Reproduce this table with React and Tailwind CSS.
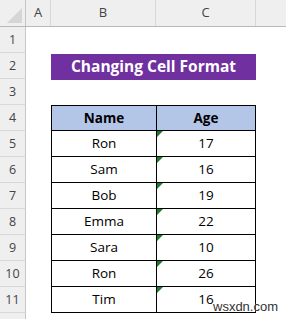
import React from "react";

const rows = [
  { name: "Ron", age: "17" },
  { name: "Sam", age: "16" },
  { name: "Bob", age: "19" },
  { name: "Emma", age: "22" },
  { name: "Sara", age: "10" },
  { name: "Ron", age: "26" },
  { name: "Tim", age: "16" },
];

const RowHead = ({ n }) => (
  <div className="w-[26px] shrink-0 h-full bg-[#efefef] border-r border-b border-r-[#c6c6c6] border-b-[#d8d8d8] flex items-end justify-center pb-[2px] text-[12.5px] text-[#444]">
    {n}
  </div>
);

const Triangle = () => (
  <svg className="absolute left-0 top-0" width="6" height="6" viewBox="0 0 6 6">
    <polygon points="0,0 6,0 0,6" fill="#1f7a2e" />
  </svg>
);

const App = () => {
  return (
    <div className="relative w-[286px] h-[319px] overflow-hidden bg-white font-['Open_Sans',sans-serif] text-black">
      <div className="flex h-[27px] bg-[#efefef] border-b border-[#b9b9b9] text-[13px] text-[#444]">
        <div className="w-[26px] shrink-0 border-r border-[#c6c6c6] relative">
          <svg className="absolute right-[3px] bottom-[3px]" width="15" height="15" viewBox="0 0 15 15">
            <polygon points="15,0 15,15 0,15" fill="#d6d6d6" />
          </svg>
        </div>
        <div className="w-[25px] shrink-0 border-r border-[#d8d8d8] flex items-center justify-center">A</div>
        <div className="w-[105px] shrink-0 border-r border-[#d8d8d8] flex items-center justify-center">B</div>
        <div className="w-[100px] shrink-0 border-r border-[#d8d8d8] flex items-center justify-center">C</div>
        <div className="flex-1" />
      </div>

      <div className="flex h-[26px]">
        <RowHead n="1" />
      </div>
      <div className="flex h-[26px]">
        <RowHead n="2" />
        <div className="w-[25px] shrink-0" />
        <div className="w-[205px] shrink-0 pt-[1px]">
          <div className="h-[26px] bg-[#7030a0] text-white font-bold text-[15.5px] flex items-center justify-center">
            Changing Cell Format
          </div>
        </div>
      </div>
      <div className="flex h-[26px]">
        <RowHead n="3" />
      </div>
      <div className="flex h-[26px]">
        <RowHead n="4" />
        <div className="w-[25px] shrink-0" />
        <div className="w-[105px] shrink-0 bg-[#b4c6e7] border border-r-0 border-black flex items-center justify-center font-bold text-[13.5px]">
          Name
        </div>
        <div className="w-[100px] shrink-0 bg-[#b4c6e7] border border-black flex items-center justify-center font-bold text-[13.5px]">
          Age
        </div>
      </div>
      {rows.map((r, i) => (
        <div key={i} className="flex h-[26px]">
          <RowHead n={String(i + 5)} />
          <div className="w-[25px] shrink-0" />
          <div className="w-[105px] shrink-0 border-l border-b border-black flex items-center justify-center text-[13.5px]">
            {r.name}
          </div>
          <div className="relative w-[100px] shrink-0 border-l border-r border-b border-black flex items-center justify-center text-[13.5px]">
            <Triangle />
            {r.age}
          </div>
        </div>
      ))}
      <div className="flex h-[26px]">
        <RowHead n="" />
      </div>

      <div className="absolute left-[213px] top-[300px] font-['Liberation_Sans',sans-serif] text-[13px] leading-none text-[#333] [text-shadow:0_0_2px_white]">
        wsxdn.com
      </div>
    </div>
  );
};

export default App;
